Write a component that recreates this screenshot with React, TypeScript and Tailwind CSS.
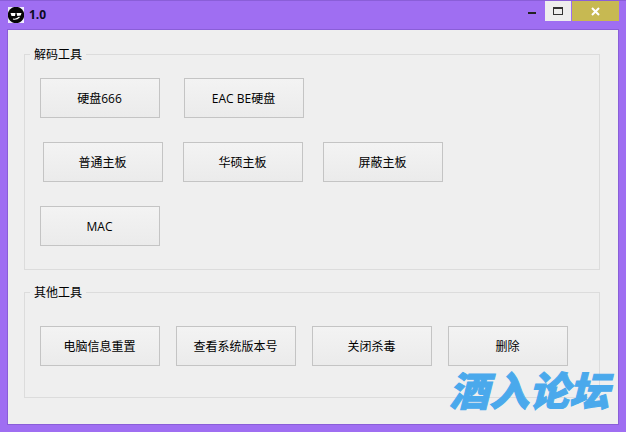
function Btn({ label, className = "" }: { label: string; className?: string }) {
  return (
    <button className={"w-[120px] h-[40px] shrink-0 border border-[#c4c4c4] bg-gradient-to-b from-[#f3f3f3] to-[#ebebeb] pr-[1px] pt-[2px] text-[12px] text-[#000] " + className}>
      {label}
    </button>
  );
}

function Group({ title, className, children }: { title: string; className: string; children: React.ReactNode }) {
  return (
    <div className={"relative border border-[#dcdcdc] " + className}>
      <span className="absolute left-[5px] top-[-9px] bg-[#efefef] px-[4px] text-[12px] leading-[17px] text-[#000]">{title}</span>
      {children}
    </div>
  );
}

export default function App() {
  return (
    <div
      className="relative flex h-[432px] w-[626px] flex-col overflow-hidden bg-[#9f6ef2] text-[#111]"
      style={{ fontFamily: '"Open Sans","Noto Sans CJK SC",sans-serif' }}
    >
      <div className="flex h-[30px] shrink-0 items-start border-t border-[#8a5ed8] pl-[8px]">
        <svg width="16" height="16" viewBox="0 0 16 16" className="mt-[6px]">
          <rect width="16" height="16" fill="#f0ecff" />
          <circle cx="8" cy="8" r="8.2" fill="#050505" />
          <path d="M2.5 6h5l-.5 3H3.5zM8.5 6h5l-.8 2.5L9.3 9z" fill="#fff" />
          <path d="M5 12q3.5 1 6.5-2" stroke="#fff" strokeWidth="1.1" fill="none" />
        </svg>
        <span className="ml-[5px] mt-[6px] text-[12px] font-bold leading-[16px] text-[#0a0a20]">1.0</span>
        <div className="ml-auto mr-[7px] flex items-start">
          <div className="flex h-[20px] w-[27px] items-center justify-center pt-[3px]">
            <span className="h-[2px] w-[8px] bg-[#222]" />
          </div>
          <div className="flex h-[20px] w-[26px] items-center justify-center bg-[#eeeeee]">
            <span className="h-[8px] w-[10px] border border-t-2 border-[#333]" />
          </div>
          <div className="ml-[1px] flex h-[20px] w-[47px] items-center justify-center bg-[#c7b952]">
            <svg width="9" height="9" viewBox="0 0 9 9">
              <path d="M1 1l7 7M8 1L1 8" stroke="#fff" strokeWidth="2" />
            </svg>
          </div>
        </div>
      </div>
      <div className="mx-[8px] h-[394px] bg-[#efefef] px-[16px] pt-[24px] outline outline-1 outline-[#8a5ed8]">
        <Group title="解码工具" className="h-[216px] w-[576px]">
          <div className="flex gap-[24px] pl-[15px] pt-[23px]">
            <Btn label="硬盘666" />
            <Btn label="EAC BE硬盘" />
          </div>
          <div className="flex gap-[20px] pl-[18px] pt-[24px]">
            <Btn label="普通主板" />
            <Btn label="华硕主板" />
            <Btn label="屏蔽主板" />
          </div>
          <div className="pl-[15px] pt-[24px]">
            <Btn label="MAC" />
          </div>
        </Group>
        <Group title="其他工具" className="mt-[22px] h-[106px] w-[576px]">
          <div className="flex gap-[16px] pl-[15px] pt-[33px]">
            <Btn label="电脑信息重置" />
            <Btn label="查看系统版本号" />
            <Btn label="关闭杀毒" />
            <Btn label="删除" />
          </div>
        </Group>
      </div>
      <span
        className="absolute left-[449px] top-[365px] whitespace-nowrap text-[40px] font-black italic leading-[48px] text-[#4aa9ec] [-webkit-text-stroke:1px_#4aa9ec]"
        style={{ fontFamily: '"Noto Sans CJK SC",sans-serif' }}
      >
        酒入论坛
      </span>
    </div>
  );
}
